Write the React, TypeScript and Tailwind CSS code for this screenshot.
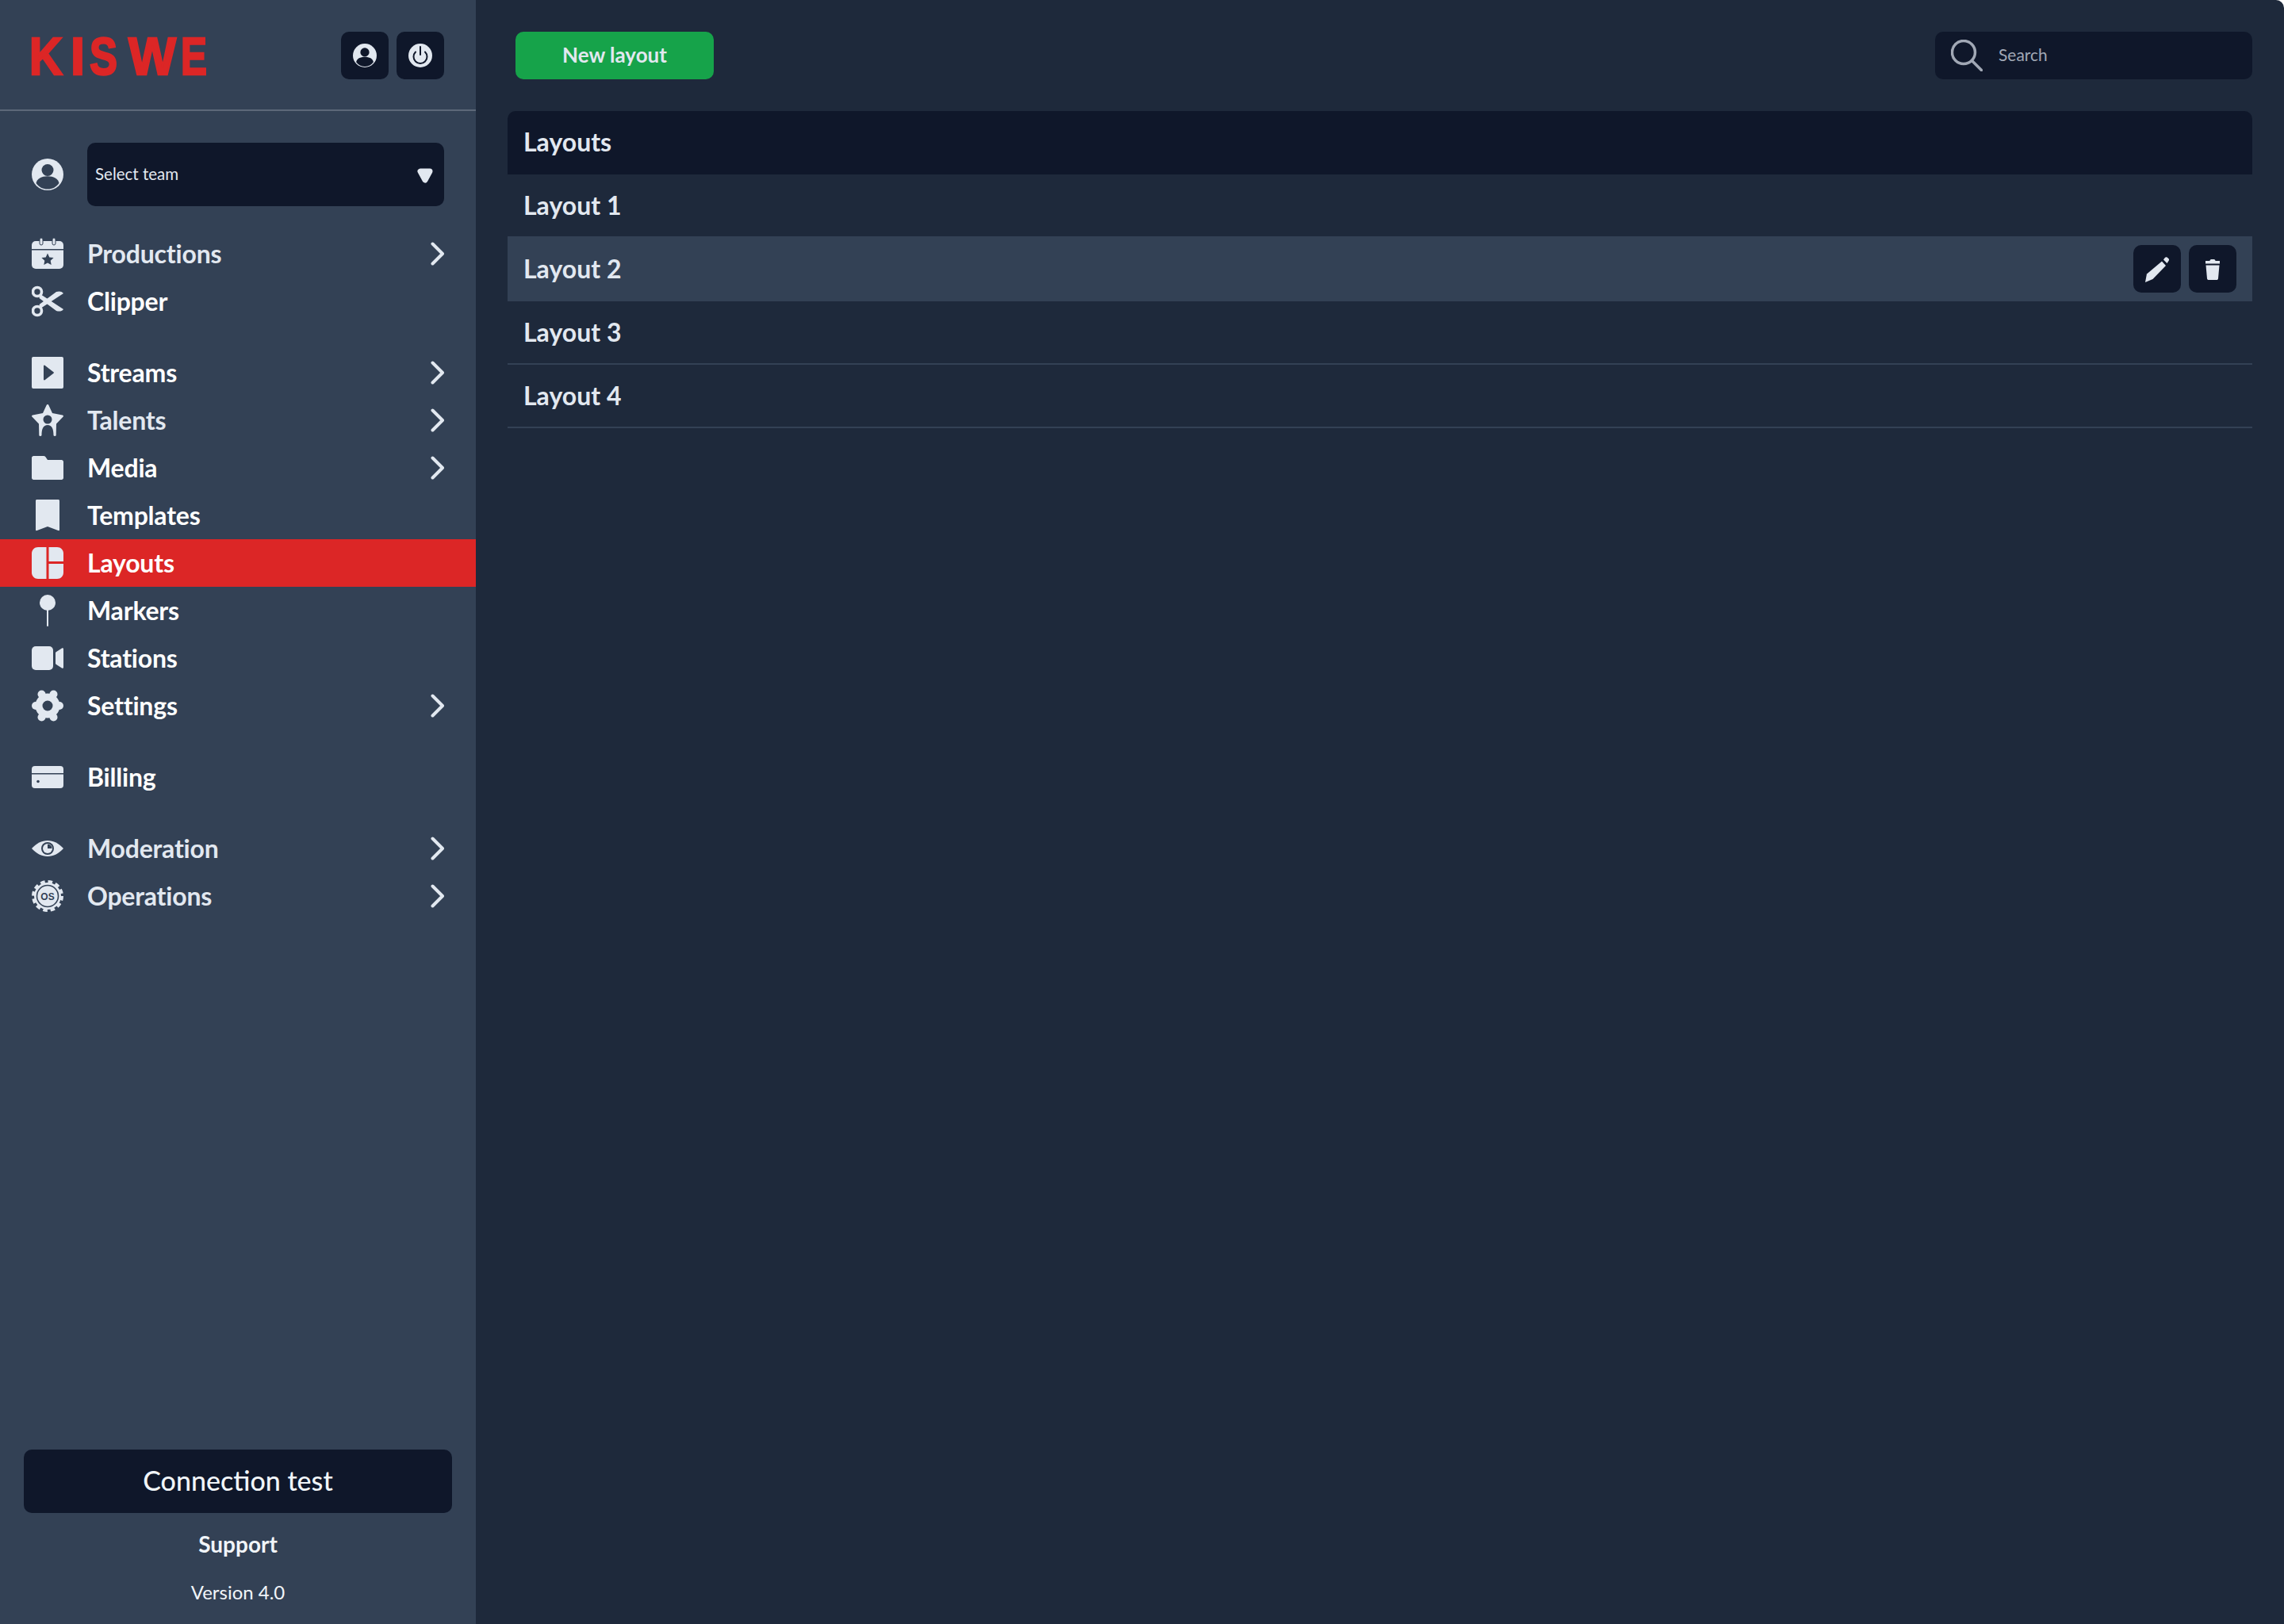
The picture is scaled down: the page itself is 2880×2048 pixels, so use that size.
import React, { FC, ReactNode } from 'react'

const SLATE_700 = '#334155'
const SLATE_900 = '#0f172a'
const LIGHT = '#e2e8f0'

const UserIcon: FC<{ cut: string; className?: string }> = ({ cut, className }) => (
  <svg viewBox="0 0 40 40" className={className}>
    <circle cx="20" cy="20" r="20" fill={LIGHT} />
    <circle cx="20" cy="14.5" r="7.5" fill={cut} />
    <path d="M5.5 31c1-6 7-8.800 14.500-8.800S33.500 25 34.500 31C31 36 26 38.500 20 38.500S9 36 5.500 31Z" fill={cut} />
  </svg>
)

const PowerIcon: FC = () => (
  <svg viewBox="0 0 30 30" className="w-[30px] h-[30px]">
    <circle cx="15" cy="15" r="15" fill={LIGHT} />
    <path d="M9 10.500a8.500 8.500 0 1 0 12 0" fill="none" stroke={SLATE_900} strokeWidth="2" strokeLinecap="round" />
    <path d="M15 4v10" fill="none" stroke={SLATE_900} strokeWidth="2" strokeLinecap="round" />
  </svg>
)

const Calendar = () => (
  <svg viewBox="0 0 40 40" className="w-10 h-10">
    <rect x="0" y="4" width="40" height="35" rx="5" fill={LIGHT} />
    <rect x="0" y="14" width="40" height="1.500" fill={SLATE_700} />
    <rect x="10" y="0" width="4" height="9" rx="2" fill={LIGHT} stroke={SLATE_700} strokeWidth="1" />
    <rect x="26" y="0" width="4" height="9" rx="2" fill={LIGHT} stroke={SLATE_700} strokeWidth="1" />
    <path d="m20 19.500 2.300 4.900 5.300.700-3.900 3.600 1 5.300-4.700-2.600-4.700 2.600 1-5.300-3.900-3.600 5.300-.700Z" fill={SLATE_700} />
  </svg>
)

const Scissors = () => (
  <svg viewBox="0 0 40 40" className="w-10 h-10">
    <circle cx="7" cy="8" r="5.500" fill="none" stroke={LIGHT} strokeWidth="3.600" />
    <circle cx="7" cy="32" r="5.500" fill="none" stroke={LIGHT} strokeWidth="3.600" />
    <path d="M11 11 40 30c-2 3-6 3-9 2L9.500 16Z" fill={LIGHT} />
    <path d="M11 29 40 10c-2-3-6-3-9-2L9.500 24Z" fill={LIGHT} />
  </svg>
)

const Play = () => (
  <svg viewBox="0 0 40 40" className="w-10 h-10">
    <rect width="40" height="40" rx="2" fill={LIGHT} />
    <path d="M15 11.500c0-.800.900-1.200 1.500-.700l11 8.500c.500.400.500 1 0 1.400l-11 8.500c-.600.500-1.500.100-1.500-.700Z" fill={SLATE_700} />
  </svg>
)

const Talent = () => (
  <svg viewBox="0 0 40 40" className="w-10 h-10">
    <path
      d="M20 0c.700 0 1.200.500 1.500 1.200L26 11l12.800 2.400c1.100.200 1.500 1.400.800 2.200L31 24.500 30.700 38.800c0 .700-.500 1.200-1.200 1.200h-.700c-.700 0-1.300-.500-1.300-1.200C27.500 31 25.500 26 20 26s-7.500 5-7.500 12.800c0 .700-.600 1.200-1.300 1.200h-.700c-.700 0-1.200-.500-1.200-1.200L9 24.500.400 15.600c-.700-.800-.300-2 .800-2.200L14 11l4.500-9.800C18.800.500 19.300 0 20 0Z"
      fill={LIGHT}
    />
    <circle cx="20" cy="19" r="5.500" fill={SLATE_700} />
  </svg>
)

const Folder = () => (
  <svg viewBox="0 0 40 30" className="w-10 h-[30px]">
    <path d="M2.500 0H15c1 0 1.700.400 2.300 1.100L20 5h17.500C39 5 40 6 40 7.500v20c0 1.500-1 2.500-2.500 2.500h-35C1 30 0 29 0 27.500v-25C0 1 1 0 2.500 0Z" fill={LIGHT} />
  </svg>
)

const Bookmark = () => (
  <svg viewBox="0 0 30 40" className="w-[30px] h-10">
    <path d="M1.500 0h27C29.400 0 30 .600 30 1.500V38c0 1-.800 1.500-1.700 1.100L15 34 1.700 39.100C.800 39.500 0 39 0 38V1.500C0 .600.600 0 1.500 0Z" fill={LIGHT} />
  </svg>
)

const Panels = () => (
  <svg viewBox="0 0 40 40" className="w-10 h-10">
    <path d="M8 0h10.500v40H8c-4.500 0-8-3.500-8-8V8c0-4.500 3.500-8 8-8Z" fill={LIGHT} />
    <path d="M21.500 0H32c4.500 0 8 3.500 8 8v10H21.500Z" fill={LIGHT} />
    <path d="M21.500 21H40v11c0 4.500-3.500 8-8 8H21.500Z" fill={LIGHT} />
  </svg>
)

const Pin = () => (
  <svg viewBox="0 0 40 40" className="w-10 h-10">
    <ellipse cx="20" cy="10" rx="10" ry="10" fill={LIGHT} />
    <path d="M20 16v23" stroke={LIGHT} strokeWidth="2" strokeLinecap="round" />
  </svg>
)

const Video = () => (
  <svg viewBox="0 0 40 30" className="w-10 h-[30px]">
    <rect width="27" height="30" rx="5" fill={LIGHT} />
    <path d="M38 2.500c1-.600 2 0 2 1v23c0 1-1 1.600-2 1l-7-4.500c-1-.600-1-1-1-2V9c0-1 0-1.400 1-2Z" fill={LIGHT} />
  </svg>
)

const Gear = () => (
  <svg viewBox="0 0 40 40" className="w-10 h-10">
    <circle cx="20" cy="20" r="15.500" fill={LIGHT} />
    <circle cx="35" cy="20" r="5" fill={LIGHT} />
    <circle cx="5" cy="20" r="5" fill={LIGHT} />
    <circle cx="27.500" cy="5.500" r="5" fill={LIGHT} />
    <circle cx="12.500" cy="5.500" r="5" fill={LIGHT} />
    <circle cx="27.500" cy="34.500" r="5" fill={LIGHT} />
    <circle cx="12.500" cy="34.500" r="5" fill={LIGHT} />
    <ellipse cx="20" cy="20" rx="6.500" ry="6.500" fill={SLATE_700} />
  </svg>
)

const Card = () => (
  <svg viewBox="0 0 40 28" className="w-10 h-7">
    <rect width="40" height="28" rx="4" fill={LIGHT} />
    <rect y="9" width="40" height="1.500" fill={SLATE_700} />
    <circle cx="8" cy="19.500" r="1.800" fill={SLATE_700} />
  </svg>
)

const Eye = () => (
  <svg viewBox="0 0 40 20" className="w-10 h-5">
    <path d="M0 10C6 3.500 12.500 0 20 0s14 3.500 20 10c-6 6.500-12.500 10-20 10S6 16.500 0 10Z" fill={LIGHT} />
    <circle cx="20" cy="10" r="8" fill={SLATE_700} />
    <circle cx="20" cy="10" r="6" fill={LIGHT} />
    <path d="M20 10V4.500a5.500 5.500 0 0 1 5.500 5.500Z" fill={SLATE_700} />
  </svg>
)

const OsGear = () => (
  <svg viewBox="0 0 40 40" className="w-10 h-10">
    <circle cx="20" cy="20" r="17" fill={LIGHT} />
    <circle cx="20" cy="20" r="18" fill="none" stroke={LIGHT} strokeWidth="4" strokeDasharray="5.500 3.925" />
    <circle cx="20" cy="20" r="13.500" fill="none" stroke={SLATE_700} strokeWidth="1.600" />
    <text x="20" y="24.500" textAnchor="middle" fontFamily="'Liberation Sans', sans-serif" fontWeight="700" fontSize="12" fill={SLATE_700}>
      OS
    </text>
  </svg>
)

const Chevron = () => (
  <svg viewBox="0 0 17 30" className="w-[17px] h-[30px]">
    <path d="M2.500 2.500 15 15 2.500 27.500" fill="none" stroke={LIGHT} strokeWidth="4" strokeLinecap="round" strokeLinejoin="round" />
  </svg>
)

const Logo = () => {
  // each glyph is squeezed to the width it has in the wordmark
  const letters: [string, number, number][] = [
    ['K', -3, 42],
    ['I', 49, 18],
    ['S', 73, 35],
    ['W', 122, 60],
    ['E', 188, 33],
  ]
  return (
    <svg viewBox="-5 0 235 78" className="w-[235px] h-[78px] -ml-[5px]">
      {letters.map(([c, x, w]) => (
        <text
          key={c}
          x={x}
          y="63"
          textLength={w}
          lengthAdjust="spacingAndGlyphs"
          fontFamily="'Liberation Sans', sans-serif"
          fontWeight="700"
          fontSize="66"
          fill="#dc2626"
          stroke="#dc2626"
          strokeWidth="2.500"
        >
          {c}
        </text>
      ))}
    </svg>
  )
}

interface NavItem {
  label: string
  icon: ReactNode
  chevron?: boolean
  active?: boolean
  dim?: boolean
}

const groups: NavItem[][] = [
  [
    { label: 'Productions', icon: <Calendar />, chevron: true, dim: true },
    { label: 'Clipper', icon: <Scissors /> },
  ],
  [
    { label: 'Streams', icon: <Play />, chevron: true },
    { label: 'Talents', icon: <Talent />, chevron: true, dim: true },
    { label: 'Media', icon: <Folder />, chevron: true },
    { label: 'Templates', icon: <Bookmark /> },
    { label: 'Layouts', icon: <Panels />, active: true },
    { label: 'Markers', icon: <Pin /> },
    { label: 'Stations', icon: <Video /> },
    { label: 'Settings', icon: <Gear />, chevron: true },
  ],
  [{ label: 'Billing', icon: <Card /> }],
  [
    { label: 'Moderation', icon: <Eye />, chevron: true, dim: true },
    { label: 'Operations', icon: <OsGear />, chevron: true, dim: true },
  ],
]

const NavRow: FC<{ item: NavItem }> = ({ item }) => (
  <div className={`flex items-center h-[60px] pl-10 pr-10 ${item.active ? 'bg-[#dc2626]' : ''}`}>
    <span className="flex items-center justify-center w-10 h-10">{item.icon}</span>
    <span className={`ml-[30px] text-[32px] tracking-[-0.2px] font-bold ${item.dim ? 'text-[#e2e8f0]' : 'text-white'}`}>{item.label}</span>
    {item.chevron && (
      <span className="ml-auto flex">
        <Chevron />
      </span>
    )}
  </div>
)

const Sidebar = () => (
  <aside className="flex flex-col w-[600px] shrink-0 h-full bg-[#334155]">
    <div className="flex items-center justify-between h-[140px] px-10 pt-[2px] border-b-2 border-[#5d6879]">
      <Logo />
      <div className="flex gap-[10px]">
        <button className="flex items-center justify-center w-[60px] h-[60px] rounded-[10px] bg-[#0f172a]">
          <UserIcon cut={SLATE_900} className="w-[30px] h-[30px]" />
        </button>
        <button className="flex items-center justify-center w-[60px] h-[60px] rounded-[10px] bg-[#0f172a]">
          <PowerIcon />
        </button>
      </div>
    </div>

    <div className="flex items-center gap-[30px] mt-10 px-10">
      <UserIcon cut={SLATE_700} className="w-10 h-10 shrink-0" />
      <div className="flex items-center justify-between flex-1 h-20 pl-[10px] pr-[14px] rounded-[10px] bg-[#0f172a]">
        <span className="pb-[2px] text-[20.5px] text-[#e2e8f0]">Select team</span>
        <svg viewBox="0 0 20 20" className="w-5 h-5 mt-[3px]">
          <path d="M4 4h12l-6 11Z" fill={LIGHT} stroke={LIGHT} strokeWidth="7" strokeLinejoin="round" />
        </svg>
      </div>
    </div>

    <nav className="flex flex-col gap-[30px] mt-[30px]">
      {groups.map((group, i) => (
        <div key={i} className="flex flex-col">
          {group.map(item => (
            <NavRow key={item.label} item={item} />
          ))}
        </div>
      ))}
    </nav>

    <div className="flex flex-col mt-auto px-[30px] pb-[10px]">
      <button className="h-20 pb-1 rounded-[10px] bg-[#0f172a] text-[34px] font-medium text-[#f1f5f9]">Connection test</button>
      <div className="flex items-center justify-center h-[60px] mt-[10px] pb-[2px] text-[28px] font-bold text-[#f1f5f9]">Support</div>
      <div className="flex items-center justify-center h-[60px] text-[24px] text-[#f1f5f9]">Version 4.0</div>
    </div>
  </aside>
)

const rows = ['Layout 1', 'Layout 2', 'Layout 3', 'Layout 4']

const RowActions = () => (
  <div className="flex gap-[10px] mr-5">
    <button className="flex items-center justify-center w-[60px] h-[60px] rounded-[10px] bg-[#0f172a]">
      <svg viewBox="0 0 30 32" className="w-[30px] h-8 mt-[2px]">
        <path d="M21 5.500 26 11 9.500 28 0 32l2-10.500Z" fill={LIGHT} />
        <path d="M23 3.500l1.800-2.400c.800-1 2-1.200 3-.400l1.500 1.300c1 .800 1 2 .200 3L27.500 8Z" fill={LIGHT} />
      </svg>
    </button>
    <button className="flex items-center justify-center w-[60px] h-[60px] rounded-[10px] bg-[#0f172a]">
      <svg viewBox="0 0 20 26" className="w-5 h-[26px] mt-[2px]">
        <path d="M6.500 2c0-1 .700-2 1.800-2h3.400c1.100 0 1.800 1 1.800 2h5.500v3.500H1V2Z" fill={LIGHT} />
        <path d="M1.500 7.500h17L17 24.200c-.100 1-.900 1.800-2 1.800H5c-1.100 0-1.900-.800-2-1.800Z" fill={LIGHT} />
      </svg>
    </button>
  </div>
)

const App = () => (
  <div className="flex w-full h-screen bg-white font-['Lato',sans-serif] overflow-hidden">
    <Sidebar />
    <main className="flex-1 h-full px-10 rounded-tr-[10px] bg-[#1e293b]">
      <div className="flex items-center justify-between h-[60px] mt-10">
        <button className="w-[250px] h-[60px] ml-[10px] pb-[2px] rounded-[10px] bg-[#16a34a] text-[26px] font-bold text-[#e2e8f0]">New layout</button>
        <div className="flex items-center w-[400px] h-[60px] pl-5 rounded-[10px] bg-[#0f172a]">
          <svg viewBox="0 0 40 40" className="w-10 h-10">
            <circle cx="16" cy="16" r="14.500" fill="none" stroke="#a1a8b5" strokeWidth="3.500" />
            <path d="M27 27 38.500 38.500" stroke="#a1a8b5" strokeWidth="3.500" strokeLinecap="round" />
          </svg>
          <span className="ml-5 pb-[3px] text-[21px] text-[#a1a8b5]">Search</span>
        </div>
      </div>

      <div className="mt-10">
        <div className="flex items-center h-20 px-5 pb-[2px] rounded-t-[10px] bg-[#0f172a] text-[32px] font-bold text-[#e2e8f0]">Layouts</div>
        {rows.map(row => (
          <div
            key={row}
            className={`flex items-center justify-between h-20 pl-5 border-b-2 border-[#334155] text-[32px] font-bold text-[#e2e8f0] ${
              row === 'Layout 2' ? 'bg-[#334155]' : ''
            }`}
          >
            {row}
            {row === 'Layout 2' && <RowActions />}
          </div>
        ))}
      </div>
    </main>
  </div>
)

export default App
